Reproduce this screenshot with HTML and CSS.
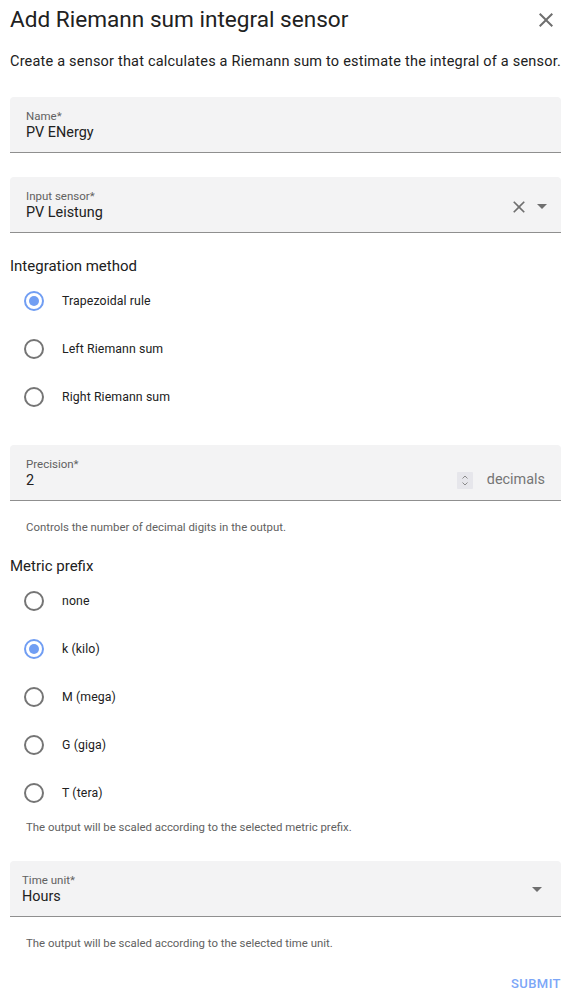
FILE: index.html
```html
<!DOCTYPE html>
<html lang="en">
<head>
    <meta charset="UTF-8">
    <meta name="viewport" content="width=device-width, initial-scale=1.0">
    <title>Add Riemann sum integral sensor</title>
    <link rel="stylesheet" href="styles.css">
</head>
<body>
    <div class="dialog">
        <div class="header">
            <h2>Add Riemann sum integral sensor</h2>
            <svg class="close" viewBox="0 0 24 24"><path d="M19,6.41L17.59,5L12,10.59L6.41,5L5,6.41L10.59,12L5,17.59L6.41,19L12,13.41L17.59,19L19,17.59L13.41,12L19,6.41Z"/></svg>
        </div>
        <p class="intro">Create a sensor that calculates a Riemann sum to estimate the integral of a sensor.</p>

        <div class="field">
            <div class="field-text">
                <span class="label">Name*</span>
                <span class="value">PV ENergy</span>
            </div>
        </div>

        <div class="field second">
            <div class="field-text">
                <span class="label">Input sensor*</span>
                <span class="value">PV Leistung</span>
            </div>
            <svg class="clear" viewBox="0 0 24 24"><path d="M19,6.41L17.59,5L12,10.59L6.41,5L5,6.41L10.59,12L5,17.59L6.41,19L12,13.41L17.59,19L19,17.59L13.41,12L19,6.41Z"/></svg>
            <svg class="arrow" viewBox="0 0 24 24"><path d="M7,10L12,15L17,10H7Z"/></svg>
        </div>

        <div class="group">
            <div class="group-title">Integration method</div>
            <div class="radio checked"><span class="dot"></span>Trapezoidal rule</div>
            <div class="radio"><span class="dot"></span>Left Riemann sum</div>
            <div class="radio"><span class="dot"></span>Right Riemann sum</div>
        </div>

        <div class="field precision">
            <div class="field-text">
                <span class="label">Precision*</span>
                <span class="value">2</span>
            </div>
            <svg class="spinner" viewBox="0 0 16 17">
                <rect width="16" height="17" rx="1" fill="#e6e6eb"/>
                <path d="M5.5 6.5L8 4L10.5 6.5M5.5 10.5L8 13L10.5 10.5" fill="none" stroke="#8a8a8a" stroke-width="1"/>
            </svg>
            <span class="suffix">decimals</span>
        </div>
        <div class="helper">Controls the number of decimal digits in the output.</div>

        <div class="group metric">
            <div class="group-title">Metric prefix</div>
            <div class="radio"><span class="dot"></span>none</div>
            <div class="radio checked"><span class="dot"></span>k (kilo)</div>
            <div class="radio"><span class="dot"></span>M (mega)</div>
            <div class="radio"><span class="dot"></span>G (giga)</div>
            <div class="radio"><span class="dot"></span>T (tera)</div>
        </div>
        <div class="helper tight">The output will be scaled according to the selected metric prefix.</div>

        <div class="field time">
            <div class="field-text">
                <span class="label">Time unit*</span>
                <span class="value">Hours</span>
            </div>
            <svg class="arrow" viewBox="0 0 24 24"><path d="M7,10L12,15L17,10H7Z"/></svg>
        </div>
        <div class="helper">The output will be scaled according to the selected time unit.</div>

        <div class="actions">
            <button>Submit</button>
        </div>
    </div>
</body>
</html>
```

FILE: styles.css
```css
body {
    margin: 0;
    font-family: Roboto, "Noto Sans", sans-serif;
    color: #212121;
    background: #fff;
}
.dialog {
    width: 551px;
    padding: 0 0 0 10px;
}
.header {
    display: flex;
    align-items: center;
    justify-content: space-between;
    height: 40px;
}
.header h2 {
    margin: 0;
    font-size: 22.6px;
    font-weight: 400;
    line-height: 40px;
}
.close {
    width: 24px;
    height: 24px;
    fill: #6f6f6f;
    margin-right: 3px;
}
.intro {
    margin: 12px 0 0;
    font-size: 14.5px;
    line-height: 20px;
    letter-spacing: 0.2px;
}
.field {
    display: flex;
    align-items: center;
    height: 55px;
    margin-top: 25px;
    padding: 0 16px;
    background: #f3f3f4;
    border-radius: 4px 4px 0 0;
    border-bottom: 1px solid #8f8f8f;
}
.field.second {
    margin-top: 24px;
}
.field-text {
    flex: 1;
    display: flex;
    flex-direction: column;
    align-self: flex-start;
    padding-top: 12px;
}
.label {
    font-size: 11.5px;
    line-height: 14px;
    color: #616161;
}
.value {
    margin-top: 2px;
    font-size: 14.4px;
    line-height: 16px;
    color: #212121;
}
.clear {
    width: 20px;
    height: 20px;
    fill: #6f6f6f;
    margin: 4px 1px 0 0;
}
.second .arrow {
    margin: 3px -9px 0 0;
}
.arrow {
    width: 24px;
    height: 24px;
    fill: #6f6f6f;
    margin-right: -4px;
}
.group {
    margin-top: 22px;
}
.group.metric {
    margin-top: 20px;
}
.group-title {
    font-size: 15px;
    line-height: 22px;
}
.radio {
    display: flex;
    align-items: center;
    height: 48px;
    font-size: 12.3px;
    letter-spacing: 0.1px;
}
.dot {
    box-sizing: border-box;
    width: 20px;
    height: 20px;
    margin: 0 18px 0 14px;
    border: 2px solid #757575;
    border-radius: 50%;
    position: relative;
}
.radio.checked .dot {
    border-color: #719ef3;
}
.radio.checked .dot::after {
    content: "";
    position: absolute;
    left: 3px;
    top: 3px;
    width: 10px;
    height: 10px;
    border-radius: 50%;
    background: #719ef3;
}
.precision {
    margin-top: 24px;
}
.spinner {
    align-self: flex-start;
    width: 16px;
    height: 17px;
    margin: 27px 14px 0 0;
}
.suffix {
    align-self: flex-start;
    margin-top: 27px;
    font-size: 14.4px;
    line-height: 16px;
    color: #757575;
}
.helper {
    font-size: 11.4px;
    line-height: 16px;
    color: #616161;
    padding: 18px 16px 0;
}
.helper.tight {
    padding-top: 2px;
}
.time {
    margin-top: 26px;
    padding-left: 12px;
    padding-right: 16px;
}
.actions {
    display: flex;
    justify-content: flex-end;
    margin-top: 25px;
}
button {
    border: none;
    background: none;
    padding: 0;
    font-family: Roboto, sans-serif;
    font-size: 13px;
    font-weight: 500;
    letter-spacing: 0.45px;
    text-transform: uppercase;
    color: #7ba6f7;
}
```
